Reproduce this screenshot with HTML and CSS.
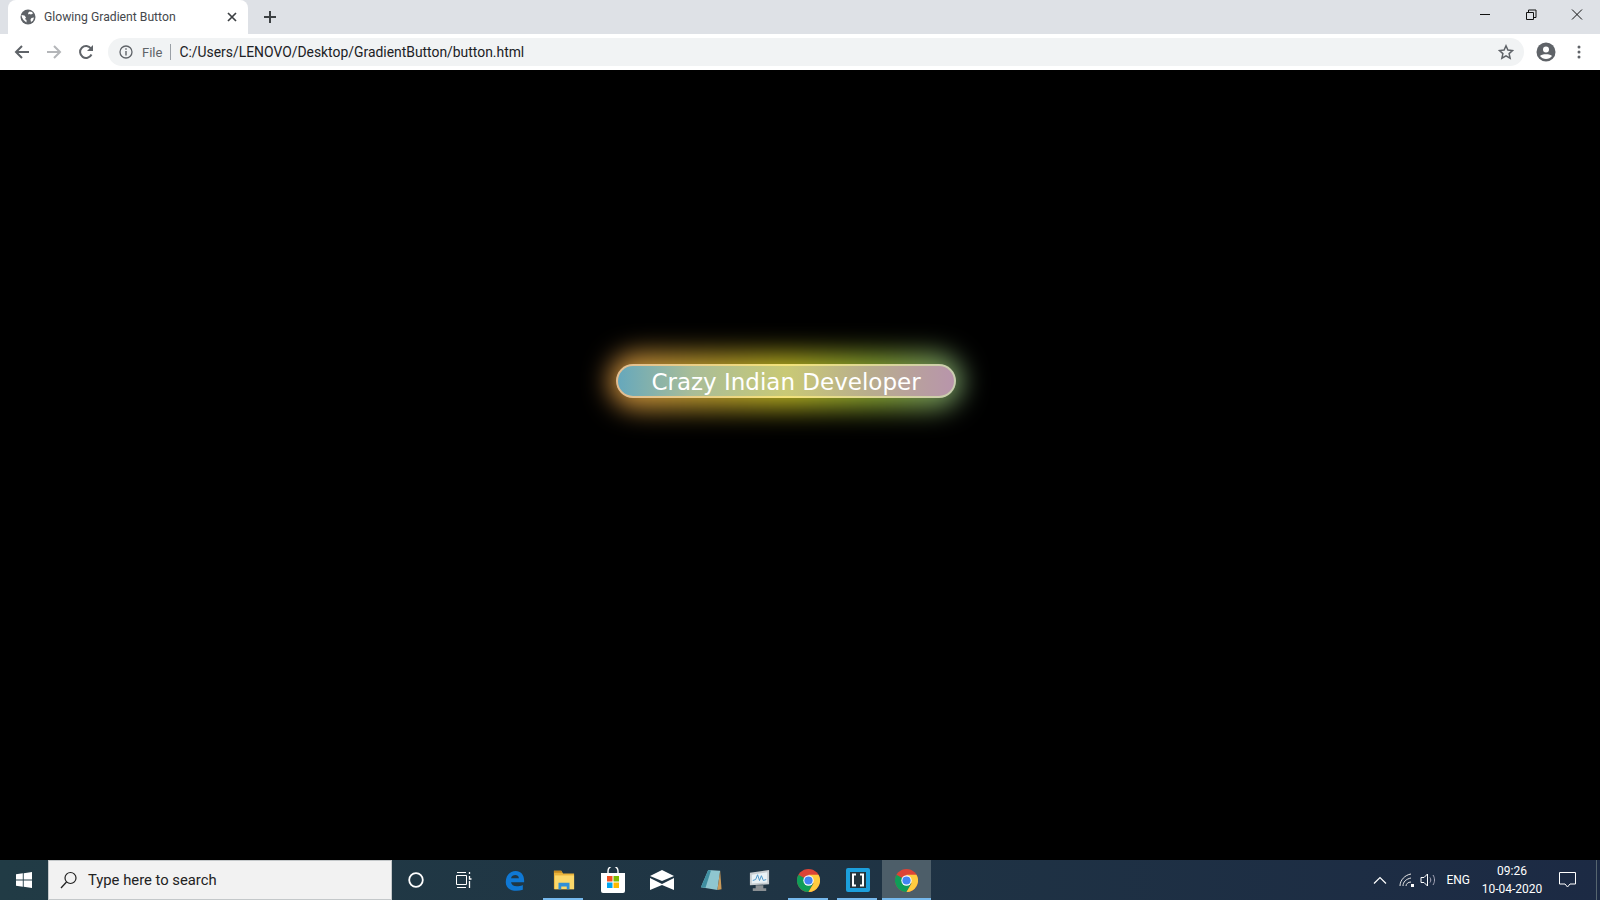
FILE: index.html
```html
<!DOCTYPE html>
<html lang="en">
  <head>
    <meta charset="UTF-8" />
    <meta name="viewport" content="width=device-width, initial-scale=1.0" />
    <title>Glowing Gradient Button</title>
    <link rel="stylesheet" href="styles.css">
  </head>

  <body>
    <!-- browser tabs -->
    <div class="tabbar">
      <div class="tab">
        <svg class="favicon" width="16" height="16" viewBox="0 0 16 16">
          <circle cx="8" cy="8" r="7.5" fill="#5f6368" />
          <path d="M1.500 6l3 .5 1.500 2-1 1.500 1.500 1v2.500L3.500 11 2 8.500zM9.500 2.500l2.500.5 1 1.500-2 1-1.500-.5-1 .5-.5-1.500zM11.500 9l2.500-.5-1 3-2 1.500-.5-2.500z" fill="#fff" />
        </svg>
        <span class="tab-title">Glowing Gradient Button</span>
        <svg class="tab-close" width="10" height="10" viewBox="0 0 10 10">
          <path d="M1 1l8 8M9 1l-8 8" stroke="#3c4043" stroke-width="1.700" />
        </svg>
      </div>
      <svg class="newtab" width="14" height="14" viewBox="0 0 14 14">
        <path d="M7 1v12M1 7h12" stroke="#3c4043" stroke-width="2" />
      </svg>
      <div class="win-controls">
        <svg width="46" height="30" viewBox="0 0 46 30"><path d="M18 14.500h10" stroke="#111" /></svg>
        <svg width="46" height="30" viewBox="0 0 46 30">
          <path d="M18.500 12.500h7v7h-7zM20.500 12.500v-2.500h7.500v7.500h-2.500" fill="none" stroke="#111" />
        </svg>
        <svg width="46" height="30" viewBox="0 0 46 30"><path d="M18 9.500l10 10M28 9.500l-10 10" stroke="#111" /></svg>
      </div>
    </div>

    <!-- address bar -->
    <div class="toolbar">
      <svg class="nav" width="16" height="16" viewBox="0 0 16 16">
        <path d="M15 8H2M8 2L2 8l6 6" fill="none" stroke="#5f6368" stroke-width="2" />
      </svg>
      <svg class="nav" width="16" height="16" viewBox="0 0 16 16">
        <path d="M1 8h13M8 2l6 6-6 6" fill="none" stroke="#b4b6b9" stroke-width="2" />
      </svg>
      <svg class="nav" width="16" height="16" viewBox="0 0 16 16">
        <path d="M13.500 10.500A6 6 0 1 1 13 4.500" fill="none" stroke="#5f6368" stroke-width="2" />
        <path d="M15 1v6H9z" fill="#5f6368" />
      </svg>
      <div class="omnibox">
        <svg width="14" height="14" viewBox="0 0 14 14">
          <circle cx="7" cy="7" r="6" fill="none" stroke="#5f6368" stroke-width="1.300" />
          <path d="M7 6v4.500M7 3.300v1.500" stroke="#5f6368" stroke-width="1.400" />
        </svg>
        <span class="scheme">File</span>
        <span class="divider"></span>
        <span class="url">C:/Users/LENOVO/Desktop/GradientButton/button.html</span>
        <svg class="star" width="16" height="16" viewBox="0 0 16 16">
          <path d="M8 1.800l1.900 4.200 4.600.5-3.400 3.100 1 4.600L8 11.800l-4.100 2.400 1-4.600-3.400-3.100 4.600-.5z" fill="none" stroke="#5f6368" stroke-width="1.500" />
        </svg>
      </div>
      <svg class="avatar" width="20" height="20" viewBox="0 0 20 20">
        <circle cx="10" cy="10" r="9.500" fill="#5f6368" />
        <circle cx="10" cy="7.500" r="3" fill="#fff" />
        <path d="M4 14c1.500-2.500 10.500-2.500 12 0-1.500 2-3.500 3-6 3s-4.500-1-6-3z" fill="#fff" />
      </svg>
      <svg class="menu" width="4" height="14" viewBox="0 0 4 14">
        <circle cx="2" cy="2" r="1.500" fill="#5f6368" />
        <circle cx="2" cy="7" r="1.500" fill="#5f6368" />
        <circle cx="2" cy="12" r="1.500" fill="#5f6368" />
      </svg>
    </div>

    <!-- page -->
    <div class="page">
      <div class="glow-btn">Crazy Indian Developer</div>
    </div>

    <!-- windows taskbar -->
    <div class="taskbar">
      <div class="start">
        <svg width="16" height="16" viewBox="0 0 16 16">
          <path d="M0 2.300l6.800-1v6.300H0zM7.700 1.200L16 0v7.600H7.700zM0 8.400h6.800v6.300l-6.800-1zM7.700 8.400H16V16l-8.300-1.200z" fill="#fff" />
        </svg>
      </div>
      <div class="searchbox">
        <svg width="18" height="18" viewBox="0 0 18 18">
          <circle cx="10.500" cy="7" r="5.500" fill="none" stroke="#222" stroke-width="1.200" />
          <path d="M6.500 11l-5.500 6" stroke="#222" stroke-width="1.300" />
        </svg>
        <span>Type here to search</span>
      </div>
      <div class="sys-btn">
        <svg width="16" height="16" viewBox="0 0 16 16">
          <circle cx="8" cy="8" r="6.800" fill="none" stroke="#fff" stroke-width="1.800" />
        </svg>
      </div>
      <div class="sys-btn">
        <svg width="16" height="16" viewBox="0 0 16 16">
          <path d="M.5 3.500h10v9H.5zM1 .5h9M1 15.500h9" fill="none" stroke="#fff" />
          <path d="M13.500 0v2M13.500 4v3h2M13.500 9v7" fill="none" stroke="#fff" stroke-width="1.300" />
        </svg>
      </div>

      <div class="apps">
        <div class="app">
          <svg width="21" height="23" viewBox="0 0 24 24">
            <path d="M2 14C2 6 7 1 13.500 1 19 1 23 5 23 12v2H8c.5 4 6 6.500 13.500 3v5.500c-8 3-19.500 1-19.500-8.500zM8 9.500h9c0-5-8-5-9 0z" fill="#0f78d4" />
          </svg>
        </div>
        <div class="app open">
          <svg width="22" height="22" viewBox="0 0 24 24">
            <path d="M1 2h8l2 3h12v17H1z" fill="#e9b43c" />
            <path d="M1 2h8l1 2H1z" fill="#c58a1f" />
            <path d="M2 7h21v15H2z" fill="#fbd86a" />
            <path d="M6 15h12v7h-3v-3H9v3H6z" fill="#2f8fd8" />
          </svg>
        </div>
        <div class="app">
          <svg width="24" height="26" viewBox="0 0 24 26">
            <path d="M7 7V4a5 5 0 0 1 10 0v3" fill="none" stroke="#fff" stroke-width="1.400" />
            <path d="M0 6h24v18a2 2 0 0 1-2 2H2a2 2 0 0 1-2-2z" fill="#fff" />
            <path d="M6 9h5.500v5.500H6z" fill="#f25022" />
            <path d="M12.500 9H18v5.500h-5.500z" fill="#7fba00" />
            <path d="M6 15.500h5.500V21H6z" fill="#00a4ef" />
            <path d="M12.500 15.500H18V21h-5.500z" fill="#ffb900" />
          </svg>
        </div>
        <div class="app">
          <svg width="24" height="20" viewBox="0 0 24 20">
            <path d="M0 6L12 0l12 6-12 5z" fill="#fff" />
            <path d="M0 8l12 6 12-6v12L12 15 0 20z" fill="#fff" />
          </svg>
        </div>
        <div class="app">
          <svg width="22" height="24" viewBox="0 0 24 24">
            <path d="M9 1l13 1-3 21L1 20z" fill="#8fc6cf" />
            <path d="M1 20L9 1l3 .5-6 19z" fill="#3f8ea0" />
            <path d="M22 2l1.500 20-4.500 1z" fill="#c99a5a" />
          </svg>
        </div>
        <div class="app">
          <svg width="23" height="23" viewBox="0 0 24 24">
            <path d="M2 4l20-3v15L2 17z" fill="#c9ced2" />
            <path d="M4 6l16-2.500V14L4 15z" fill="#e9f2f7" />
            <path d="M5 12l3-1 2-5 2 6 2-5 2 5 3-1" fill="none" stroke="#4a94c8" />
            <path d="M8 17h8v3h3v3H5v-3h3z" fill="#8b9094" />
          </svg>
        </div>
        <div class="app open">
          <svg class="chrome" width="23" height="23" viewBox="0 0 24 24">
            <circle cx="12" cy="12" r="12" fill="#dc4437" />
            <path d="M12 12L1.600 6A12 12 0 0 0 12 24l5-9z" fill="#0f9d58" />
            <path d="M12 6h10.400A12 12 0 0 1 12 24l5.200-9z" fill="#ffcd40" />
            <circle cx="12" cy="12" r="5.400" fill="#fff" />
            <circle cx="12" cy="12" r="4.300" fill="#4285f4" />
          </svg>
        </div>
        <div class="app open">
          <svg width="24" height="24" viewBox="0 0 24 24">
            <rect width="24" height="24" rx="2" fill="#1c9fdc" />
            <rect x="4" y="4" width="16" height="16" fill="#24343c" />
            <path d="M10 6.500H7v11h3M14 6.500h3v11h-3" fill="none" stroke="#fff" stroke-width="2" />
          </svg>
        </div>
        <div class="app open active">
          <svg class="chrome" width="23" height="23" viewBox="0 0 24 24">
            <circle cx="12" cy="12" r="12" fill="#dc4437" />
            <path d="M12 12L1.600 6A12 12 0 0 0 12 24l5-9z" fill="#0f9d58" />
            <path d="M12 6h10.400A12 12 0 0 1 12 24l5.200-9z" fill="#ffcd40" />
            <circle cx="12" cy="12" r="5.400" fill="#fff" />
            <circle cx="12" cy="12" r="4.300" fill="#4285f4" />
          </svg>
        </div>
      </div>

      <div class="tray">
        <svg width="14" height="8" viewBox="0 0 14 8">
          <path d="M1 7.500l6-6 6 6" fill="none" stroke="#fff" stroke-width="1.200" />
        </svg>
        <svg class="tray-wifi" width="16" height="14" viewBox="0 0 16 14">
          <path d="M1 13C1 7 6 2 12 1M4 13c0-4 3-7 8-8M7 13c0-2 2-4 5-4" fill="none" stroke="#e6e6e6" />
          <path d="M12 11h3v3h-3z" fill="#fff" />
        </svg>
        <svg class="tray-vol" width="17" height="14" viewBox="0 0 17 14">
          <path d="M1 4.500h3l3.500-3.500v12L4 9.500H1z" fill="none" stroke="#fff" />
          <path d="M10 4.500c1 1.500 1 3.500 0 5M13 2c2 3 2 7 0 10" fill="none" stroke="#aab" />
        </svg>
        <span class="lang">ENG</span>
        <div class="clock">
          <span>09:26</span>
          <span>10-04-2020</span>
        </div>
        <svg class="notif" width="17" height="16" viewBox="0 0 17 16">
          <path d="M.5.500h16v11.500h-5.500l-2.500 3-2.500-3H.5z" fill="none" stroke="#fff" />
        </svg>
        <span class="show-desktop"></span>
      </div>
    </div>
  </body>
</html>
```

FILE: styles.css
```css
* {
  box-sizing: border-box;
}

body {
  margin: 0;
  width: 1600px;
  height: 900px;
  overflow: hidden;
  display: flex;
  flex-direction: column;
  background: #000;
  font-family: Roboto, "Liberation Sans", sans-serif;
}

/* tabs */
.tabbar {
  height: 34px;
  flex: none;
  display: flex;
  align-items: flex-end;
  padding-left: 8px;
  background: #dee1e6;
}

.tab {
  width: 240px;
  height: 34px;
  display: flex;
  align-items: center;
  padding: 0 11px 0 12px;
  background: #fff;
  border-radius: 8px 8px 0 0;
}

.tab-title {
  flex: 1;
  margin-left: 8px;
  font-size: 12.2px;
  color: #45484c;
}

.newtab {
  margin: 0 0 10px 15px;
}

.win-controls {
  margin-left: auto;
  align-self: flex-start;
  display: flex;
}

/* address bar */
.toolbar {
  height: 36px;
  flex: none;
  display: flex;
  align-items: center;
  padding-left: 14px;
  background: #fff;
}

.nav {
  margin-right: 16px;
}

.omnibox {
  width: 1416px;
  height: 28px;
  margin-left: -2px;
  display: flex;
  align-items: center;
  padding: 0 10px 0 11px;
  background: #f1f3f4;
  border-radius: 14px;
}

.scheme {
  margin-left: 9px;
  font-size: 13px;
  color: #5f6368;
}

.divider {
  width: 1px;
  height: 16px;
  margin: 0 8px 0 8px;
  background: #9aa0a6;
}

.url {
  font-size: 13.9px;
  color: #202124;
}

.star {
  margin-left: auto;
}

.avatar {
  margin-left: 12px;
}

.menu {
  margin-left: 21px;
}

/* page with the button */
.page {
  flex: 1;
  padding: 294px 0 0 616px;
}

.glow-btn {
  position: relative;
  width: 340px;
  height: 34px;
  display: flex;
  align-items: center;
  justify-content: center;
  padding-top: 1px;
  border: 2px solid transparent;
  border-radius: 17px;
  background:
    linear-gradient(90deg, #66a8bc 0%, #a9bd98 22%, #c9c975 50%, #b8ad8e 75%, #b895ab 100%) padding-box,
    linear-gradient(90deg, #e2bd92 0%, #f2e27a 50%, #c9cdb0 100%) border-box;
  font-family: "Comic Sans MS", "DejaVu Sans", sans-serif;
  font-size: 23px;
  color: #fff;
}

.glow-btn::before {
  content: "";
  position: absolute;
  z-index: -1;
  inset: -13px -9px;
  border-radius: 30px;
  background: linear-gradient(90deg, #c98a3e 0%, #b89a2a 30%, #b3ac1f 50%, #84a030 75%, #6f9468 100%);
  filter: blur(13px);
}

/* taskbar */
.taskbar {
  height: 40px;
  flex: none;
  display: flex;
  align-items: center;
  background: linear-gradient(90deg, #213b45 0%, #1f3444 50%, #1c2a44 100%);
}

.start {
  width: 48px;
  display: flex;
  justify-content: center;
}

.searchbox {
  width: 344px;
  height: 40px;
  display: flex;
  align-items: center;
  gap: 10px;
  padding-left: 11px;
  background: #f2f2f2;
  border: 1px solid #c4c8ca;
  font-size: 14.8px;
  color: #222;
}

.sys-btn {
  width: 48px;
  display: flex;
  justify-content: center;
}

.apps {
  display: flex;
  margin-left: 2px;
  height: 40px;
}

.app {
  position: relative;
  width: 49px;
  height: 40px;
  display: flex;
  align-items: center;
  justify-content: center;
}

.app.open::after {
  content: "";
  position: absolute;
  left: 4px;
  right: 5px;
  bottom: 0;
  height: 2px;
  background: #76b9ed;
}

.app.active {
  background-color: #4d5e69;
}

.app.active::after {
  left: 0;
  right: 0;
}

.tray {
  margin-left: auto;
  height: 40px;
  display: flex;
  align-items: center;
  color: #fff;
}

.tray-wifi {
  margin-left: 12px;
}

.tray-vol {
  margin-left: 5px;
}

.lang {
  margin-left: 9px;
  font-size: 12px;
}

.clock {
  width: 70px;
  margin-left: 7px;
  display: flex;
  flex-direction: column;
  align-items: center;
  font-size: 12px;
  line-height: 18px;
}

.notif {
  margin-left: 12px;
}

.show-desktop {
  width: 1px;
  height: 40px;
  margin-left: 20px;
  margin-right: 3px;
  background: #56656f;
}
```
